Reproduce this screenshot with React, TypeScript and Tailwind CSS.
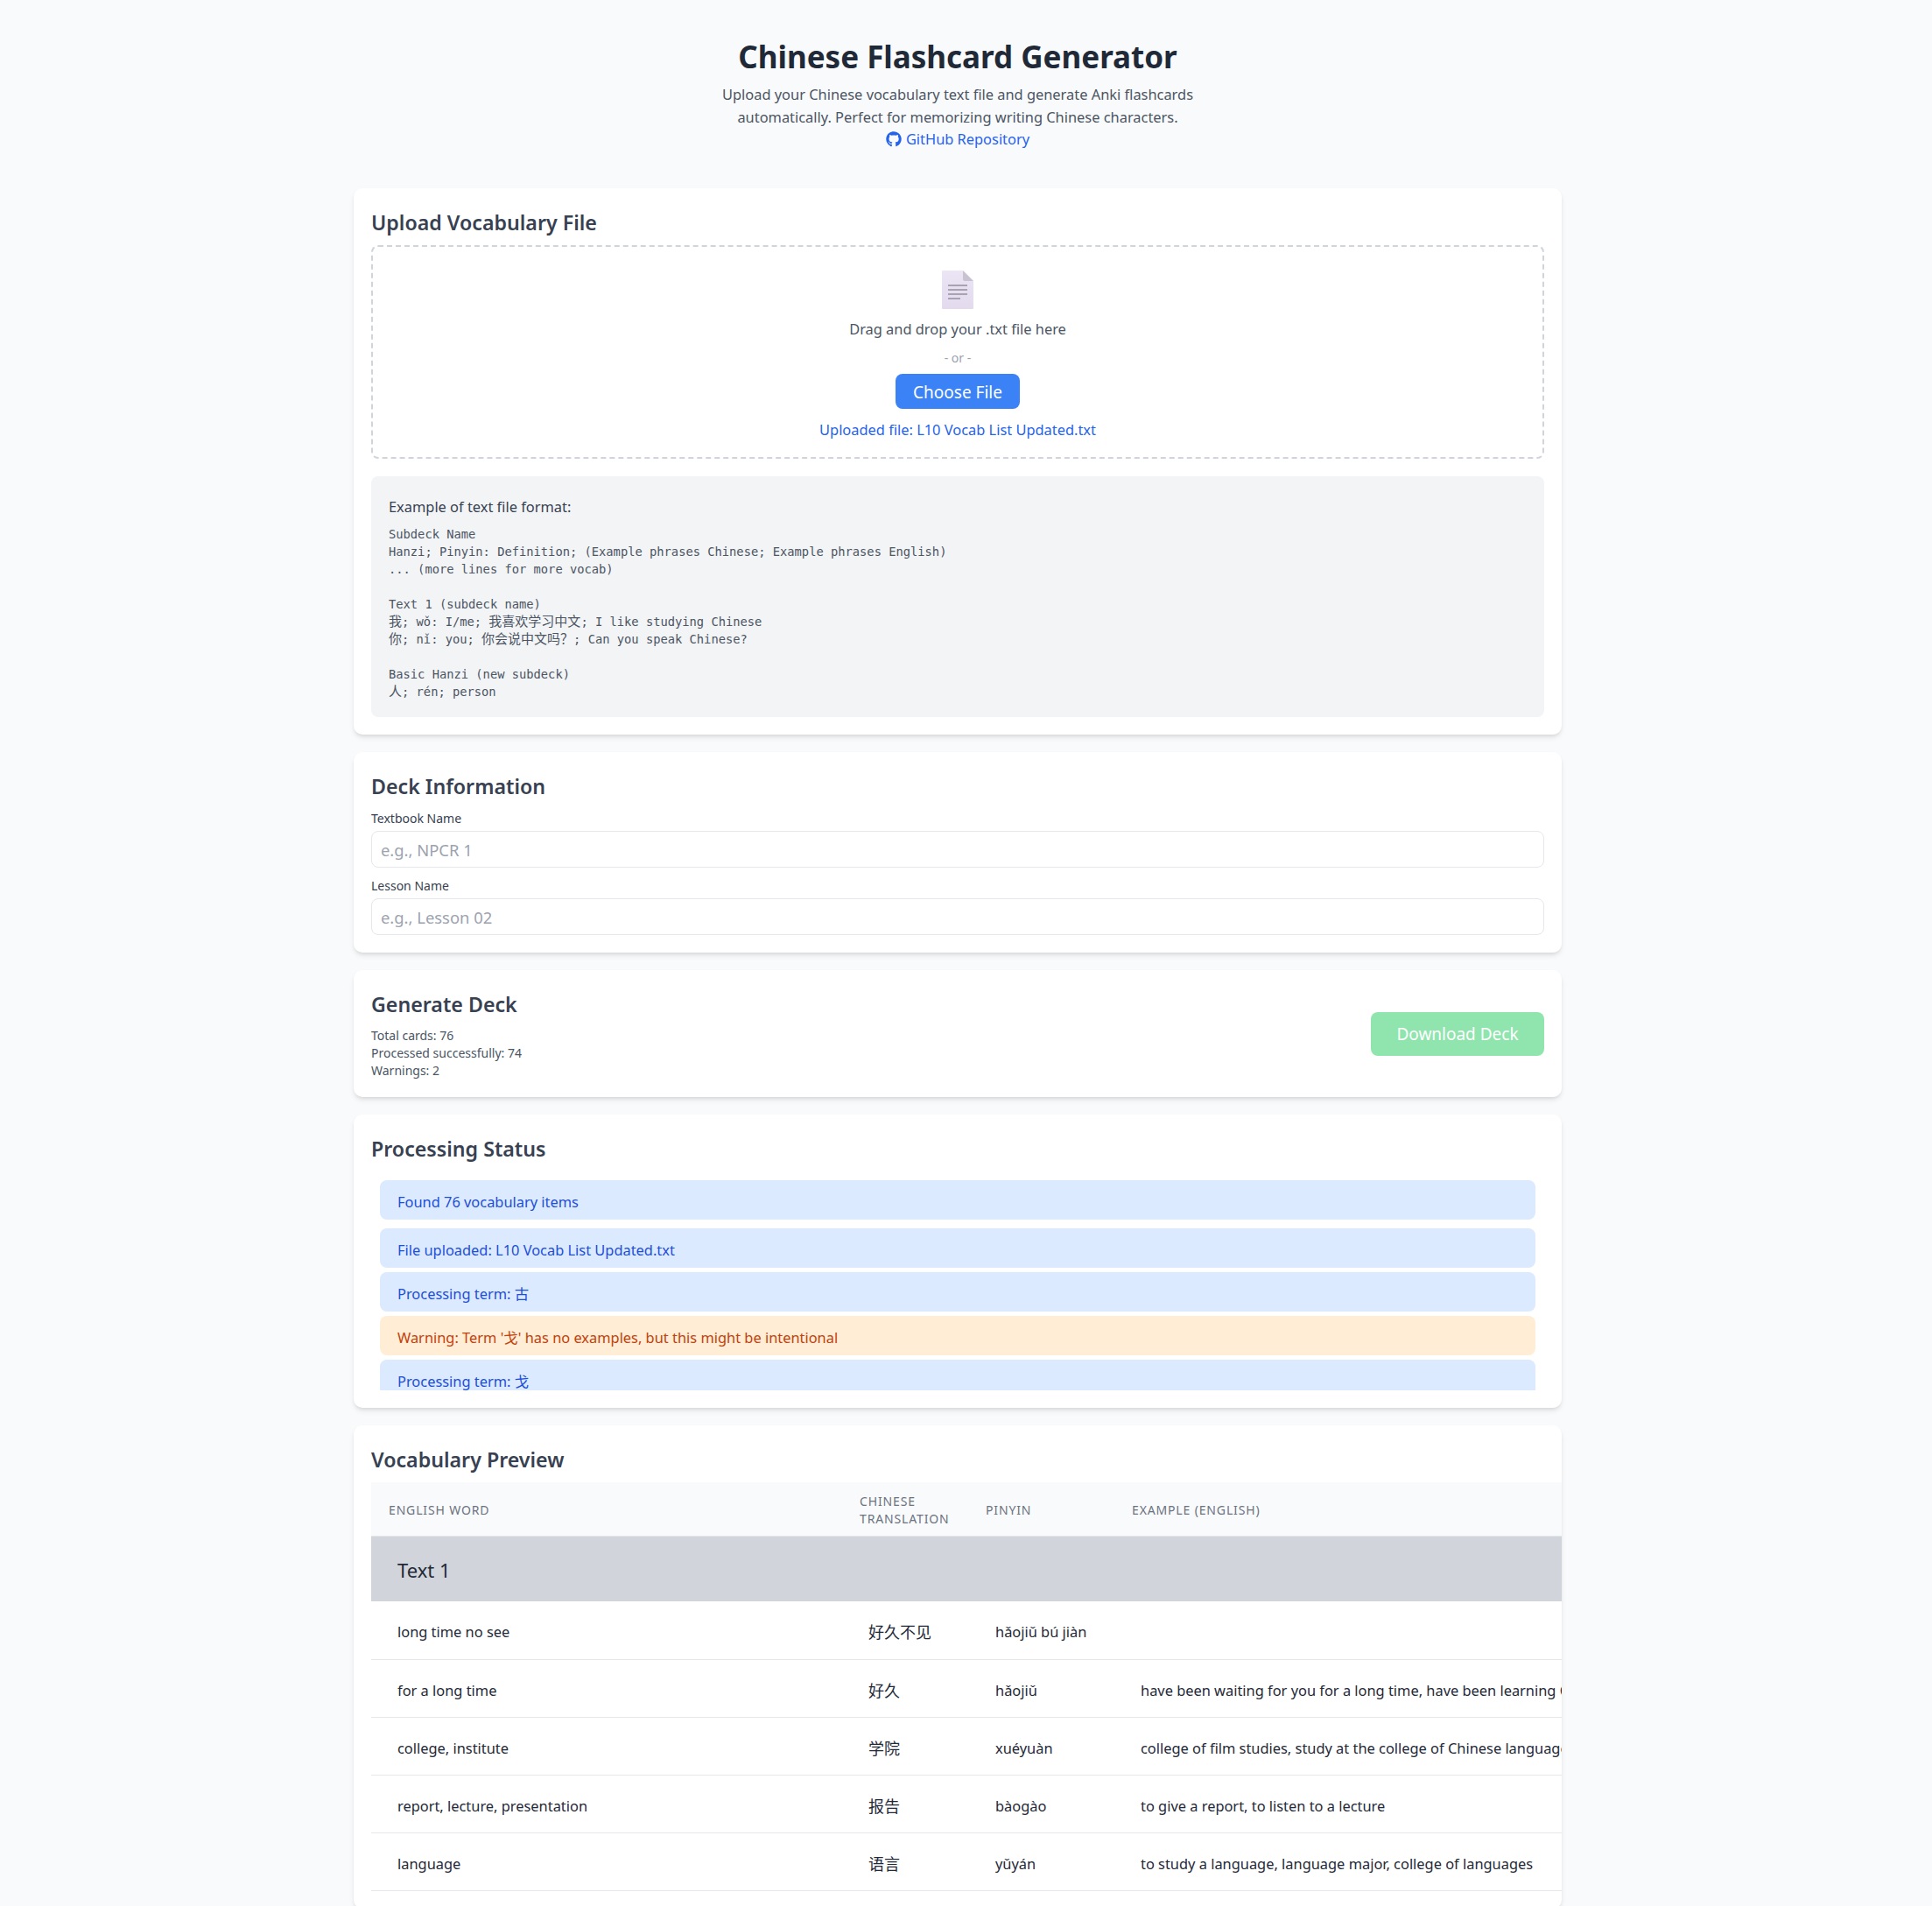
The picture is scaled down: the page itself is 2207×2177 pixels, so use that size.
import { FaGithub } from "react-icons/fa";

const sans = "font-['Noto_Sans','Noto_Sans_CJK_SC',sans-serif]";

function FileIcon() {
  return (
    <svg width="38" height="46" viewBox="0 0 38 46" className="block">
      <defs>
        <linearGradient id="pg" x1="0" y1="0" x2="0" y2="1">
          <stop offset="0" stopColor="#ebe5f5" />
          <stop offset="1" stopColor="#e3daee" />
        </linearGradient>
      </defs>
      <path d="M2 1h23l12 12v31a1 1 0 0 1-1 1H2a1 1 0 0 1-1-1V2a1 1 0 0 1 1-1z" fill="url(#pg)" />
      <path d="M25 1l12 12H27a2 2 0 0 1-2-2z" fill="#c9c3d1" />
      <path d="M8 17h22v2H8zM8 22h22v2H8zM8 27h22v2H8zM8 32h14v2H8z" fill="#a8a2b1" />
    </svg>
  );
}

function Han({ children }: { children: React.ReactNode }) {
  return <span className="text-[15px] leading-none font-['Noto_Sans_CJK_SC',sans-serif]">{children}</span>;
}

function Line({ children }: { children?: React.ReactNode }) {
  return <div className="h-5 overflow-visible">{children}</div>;
}

function MonoBlock() {
  return (
    <pre className="mt-[8px] font-['DejaVu_Sans_Mono','Noto_Sans_CJK_SC',monospace] text-[13.75px] leading-[20px] text-[#4b5563]">
      <Line>Subdeck Name</Line>
      <Line>Hanzi; Pinyin: Definition; (Example phrases Chinese; Example phrases English)</Line>
      <Line>... (more lines for more vocab)</Line>
      <Line />
      <Line>Text 1 (subdeck name)</Line>
      <Line><Han>我</Han>; wǒ: I/me; <Han>我喜欢学习中文</Han>; I like studying Chinese</Line>
      <Line><Han>你</Han>; nǐ: you; <Han>你会说中文吗？</Han>; Can you speak Chinese?</Line>
      <Line />
      <Line>Basic Hanzi (new subdeck)</Line>
      <Line><Han>人</Han>; rén; person</Line>
    </pre>
  );
}

const rows = [
  ["long time no see", "好久不见", "hǎojiǔ bú jiàn", ""],
  ["for a long time", "好久", "hǎojiǔ", "have been waiting for you for a long time, have been learning Chinese for a long time"],
  ["college, institute", "学院", "xuéyuàn", "college of film studies, study at the college of Chinese language and culture"],
  ["report, lecture, presentation", "报告", "bàogào", "to give a report, to listen to a lecture"],
  ["language", "语言", "yǔyán", "to study a language, language major, college of languages"],
];

function Card({ children, className = "" }: { children: React.ReactNode; className?: string }) {
  return <section className={`bg-white rounded-[10px] shadow-md p-5 mb-5 ${className}`}>{children}</section>;
}

function H2({ children }: { children: React.ReactNode }) {
  return <h2 className="text-[23.2px] font-semibold leading-[38px] text-[#374151] mb-[7px]">{children}</h2>;
}

function Field({ label, placeholder, last }: { label: string; placeholder: string; last?: boolean }) {
  return (
    <div className={last ? "" : "mb-[10px]"}>
      <label className="block text-sm leading-[22px] text-[#374151] mb-[3px]">{label}</label>
      <input
        placeholder={placeholder}
        readOnly
        className="block w-full h-[42px] px-[10px] text-[18.4px] border border-[#e5e7eb] rounded-lg bg-white placeholder:text-[#9ca3af] outline-none"
      />
    </div>
  );
}

function Msg({ tone = "info", text, className = "" }: { tone?: "info" | "warn"; text: string; className?: string }) {
  const c = tone === "warn" ? "bg-[#ffedd5] text-[#c2410c]" : "bg-[#dbeafe] text-[#1d4ed8]";
  return <div className={`h-[45px] shrink-0 rounded-lg px-5 leading-[49px] ${c} ${className}`}>{text}</div>;
}

export default function App() {
  return (
    <div className={`${sans} h-[2177px] overflow-hidden bg-[#f9fafb] text-[16.4px] leading-[25.6px] text-[#1f2937] pr-[19px]`}>
      <div className="w-[1380px] mx-auto pt-[35px]">
        <header className="text-center mb-[25px] h-[155px]">
          <h1 className="text-[35px] font-bold leading-[58px] text-[#1f2937] pt-[1px]">Chinese Flashcard Generator</h1>
          <p className="w-[600px] mx-auto text-[#4b5563] mt-[1px]">
            Upload your Chinese vocabulary text file and generate Anki flashcards automatically. Perfect for memorizing writing Chinese characters.
          </p>
          <a className="inline-flex items-center gap-[5px] text-[#2563eb]">
            <FaGithub className="w-[18px] h-[18px]" />
            GitHub Repository
          </a>
        </header>

        <Card>
          <H2>Upload Vocabulary File</H2>
          <div className="h-[244px] border-2 border-dashed border-[#d1d5db] rounded-lg flex flex-col items-center pt-[26px]">
            <FileIcon />
            <p className="text-[#4b5563] mt-[9px]">Drag and drop your .txt file here</p>
            <p className="text-sm text-[#9ca3af] mt-[10px]">- or -</p>
            <button className="mt-[8px] h-[40px] w-[142px] rounded-lg bg-[#3b82f6] text-white text-[19px] pt-[5px]">Choose File</button>
            <p className="text-[#2563eb] mt-[11px]">Uploaded file: L10 Vocab List Updated.txt</p>
          </div>
          <div className="mt-5 h-[275px] rounded-lg bg-[#f3f4f6] p-5">
            <p className="text-[#374151] pt-[2px]">Example of text file format:</p>
            <MonoBlock />
          </div>
        </Card>

        <Card>
          <H2>Deck Information</H2>
          <Field label="Textbook Name" placeholder="e.g., NPCR 1" />
          <Field label="Lesson Name" placeholder="e.g., Lesson 02" last />
        </Card>

        <Card className="flex items-center justify-between">
          <div>
            <H2>Generate Deck</H2>
            <div className="text-sm leading-[20px] text-[#4b5563]">
              <p>Total cards: 76</p>
              <p>Processed successfully: 74</p>
              <p>Warnings: 2</p>
            </div>
          </div>
          <button className="h-[50px] w-[198px] rounded-lg bg-[#90e4ae] text-white text-[19px] pt-[3px]">Download Deck</button>
        </Card>

        <Card>
          <H2>Processing Status</H2>
          <div className="mt-[17px] h-[240px] overflow-hidden px-[10px] flex flex-col">
            <Msg text="Found 76 vocabulary items" className="mb-[10px]" />
            <Msg text="File uploaded: L10 Vocab List Updated.txt" className="mb-[5px]" />
            <Msg text="Processing term: 古" className="mb-[5px]" />
            <Msg tone="warn" text="Warning: Term '戈' has no examples, but this might be intentional" className="mb-[5px]" />
            <Msg text="Processing term: 戈" />
          </div>
        </Card>

        <Card className="pr-0">
          <H2>Vocabulary Preview</H2>
          <div className="overflow-hidden">
            <table className="table-fixed w-[1800px] border-collapse text-left">
              <colgroup>
                <col className="w-[538px]" />
                <col className="w-[144px]" />
                <col className="w-[167px]" />
                <col />
              </colgroup>
              <thead>
                <tr className="bg-[#f9fafb] border-b border-[#e5e7eb] h-[61px] text-sm leading-[20px] text-[#6b7280] tracking-[0.85px]">
                  <th className="px-5 pt-[3px] font-normal">ENGLISH WORD</th>
                  <th className="px-5 pt-[3px] font-normal">CHINESE TRANSLATION</th>
                  <th className="px-5 pt-[3px] font-normal">PINYIN</th>
                  <th className="px-5 pt-[3px] font-normal">EXAMPLE (ENGLISH)</th>
                </tr>
              </thead>
              <tbody>
                <tr className="bg-[#d1d5db] h-[75px]">
                  <td colSpan={4} className="px-[30px] pt-[5px] text-[22px] text-[#1f2937]">Text 1</td>
                </tr>
                {rows.map((r) => (
                  <tr key={r[0]} className="h-[66px] border-b border-[#e5e7eb] text-[#1f2937]">
                    <td className="px-[30px] pt-[5px]">{r[0]}</td>
                    <td className="px-[30px] pt-[5px] text-lg">{r[1]}</td>
                    <td className="px-[31px] pt-[5px]">{r[2]}</td>
                    <td className="px-[30px] pt-[5px] whitespace-nowrap">{r[3]}</td>
                  </tr>
                ))}
              </tbody>
            </table>
          </div>
        </Card>
      </div>
    </div>
  );
}
